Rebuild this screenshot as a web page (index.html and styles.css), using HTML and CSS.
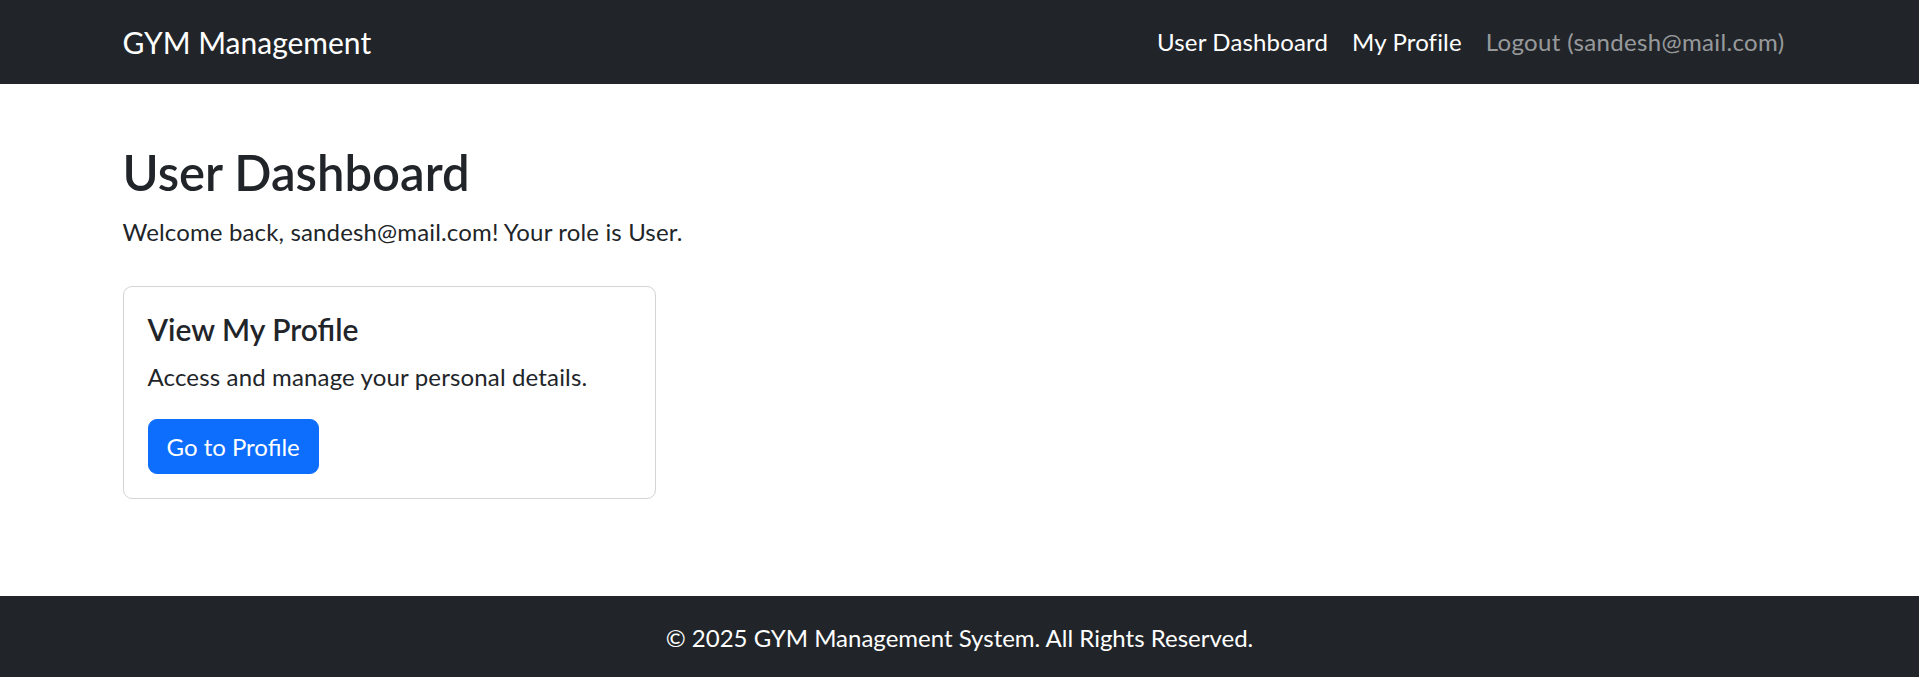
FILE: index.html
```html
<!DOCTYPE html>
<html lang="en">
<head>
<meta charset="utf-8">
<title>User Dashboard - GYM Management</title>
<link rel="stylesheet" href="styles.css">
</head>
<body>
<nav class="navbar">
  <div class="container nav-inner">
    <a class="brand" href="#">GYM Management</a>
    <ul class="nav-links">
      <li><a class="nav-link" href="#">User Dashboard</a></li>
      <li><a class="nav-link" href="#">My Profile</a></li>
      <li><a class="nav-link nav-link-muted" href="#">Logout (sandesh@mail.com)</a></li>
    </ul>
  </div>
</nav>
<main class="container main">
  <h1 class="page-title">User Dashboard</h1>
  <p class="welcome">Welcome back, sandesh@mail.com! Your role is User.</p>
  <div class="card-row">
    <div class="card">
      <h5 class="card-title">View My Profile</h5>
      <p class="card-text">Access and manage your personal details.</p>
      <a class="btn-primary" href="#">Go to Profile</a>
    </div>
  </div>
</main>
<footer class="footer">© 2025 GYM Management System. All Rights Reserved.</footer>
</body>
</html>
```
FILE: styles.css
```css
* { box-sizing: border-box; }
html, body { margin: 0; padding: 0; }
body {
  font-family: "Segoe UI", Lato, "Noto Sans", sans-serif;
  font-size: 24px;
  line-height: 36px;
  letter-spacing: 0.15px;
  color: #212529;
  background: #fff;
  min-height: 100vh;
  display: flex;
  flex-direction: column;
}
a { text-decoration: none; }
.container {
  width: 100%;
  max-width: 1710px;
  margin: 0 auto;
  padding: 0 18px;
}
.navbar {
  background: #212529;
  height: 84px;
  flex: none;
}
.nav-inner {
  height: 100%;
  display: flex;
  align-items: center;
  justify-content: space-between;
}
.brand {
  color: #fff;
  font-size: 30px;
  line-height: 45px;
  letter-spacing: 0;
}
.nav-links {
  display: flex;
  list-style: none;
  margin: 0;
  padding: 0;
}
.nav-link {
  display: block;
  padding: 12px;
  color: #fff;
  font-size: 24px;
  line-height: 36px;
}
.nav-link-muted { color: rgba(255, 255, 255, 0.55); letter-spacing: 0.35px; }
.main {
  flex: 1 0 auto;
  padding-top: 58px;
}
.page-title {
  margin: 0 0 12px;
  font-size: 49px;
  line-height: 60px;
  font-weight: 600;
  letter-spacing: 0;
}
.welcome { margin: 0; }
.card-row {
  margin-top: 36px;
  display: flex;
}
.card {
  width: 533px;
  border: 1px solid #d4d4d4;
  border-radius: 9px;
  padding: 24px;
}
.card-title {
  margin: 0 0 12px;
  font-size: 30px;
  line-height: 36px;
  font-weight: 600;
  letter-spacing: 0;
}
.card-text { margin: 0 0 24px; }
.btn-primary {
  display: inline-block;
  background: #0d6efd;
  border: 1px solid #0d6efd;
  color: #fff;
  border-radius: 9px;
  padding: 8.5px 18px;
  line-height: 36px;
  letter-spacing: 0;
}
.footer {
  flex: none;
  background: #212529;
  color: #fff;
  text-align: center;
  height: 81px;
  padding-top: 24px;
  line-height: 36px;
  letter-spacing: 0;
}
```
